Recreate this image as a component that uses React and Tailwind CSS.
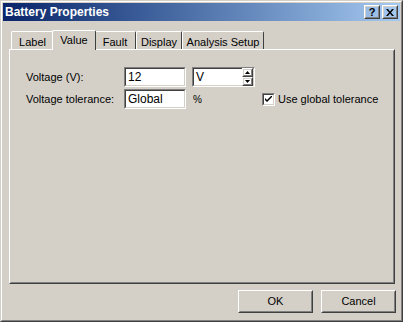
const font = { fontFamily: '"Liberation Sans", Arial, sans-serif' };

function Raised({ className = '', innerClassName = '', children }) {
  return (
    <div className={`border border-t-white border-l-white border-r-[#404040] border-b-[#404040] ${className}`}>
      <div className={`h-full w-full border border-t-[#d4d0c8] border-l-[#d4d0c8] border-r-[#808080] border-b-[#808080] ${innerClassName}`}>
        {children}
      </div>
    </div>
  );
}

function Sunken({ className = '', innerClassName = '', children }) {
  return (
    <div className={`border border-t-[#808080] border-l-[#808080] border-r-white border-b-white ${className}`}>
      <div className={`h-full w-full border border-t-[#404040] border-l-[#404040] border-r-[#d4d0c8] border-b-[#d4d0c8] bg-white ${innerClassName}`}>
        {children}
      </div>
    </div>
  );
}

function Tab({ label, active, width }) {
  if (active) {
    return (
      <div
        className="relative z-10 -mx-[2px] -mb-[1px] flex h-[20px] items-start justify-center rounded-t-[2px] border-t border-l border-r border-t-white border-l-white border-r-[#404040] bg-[#d4d0c8] pt-[1px]"
        style={{ width }}
      >
        {label}
      </div>
    );
  }
  return (
    <div
      className="flex h-[18px] items-start justify-center rounded-t-[2px] border-t border-l border-r border-t-white border-l-white border-r-[#404040] bg-[#d4d0c8] pt-[2px]"
      style={{ width }}
    >
      {label}
    </div>
  );
}

function Spinner() {
  return (
    <div className="flex w-[11px] flex-col">
      <Raised className="h-[9px] w-[11px]" innerClassName="flex items-center justify-center">
        <svg width="5" height="3" viewBox="0 0 5 3"><path d="M2.5 0 L5 3 L0 3 Z" fill="#000" /></svg>
      </Raised>
      <Raised className="h-[9px] w-[11px]" innerClassName="flex items-center justify-center">
        <svg width="5" height="3" viewBox="0 0 5 3"><path d="M0 0 L5 0 L2.5 3 Z" fill="#000" /></svg>
      </Raised>
    </div>
  );
}

export default function App() {
  const tabs = [
    { label: 'Label', width: 43 },
    { label: 'Value', width: 44, active: true },
    { label: 'Fault', width: 42 },
    { label: 'Display', width: 46 },
    { label: 'Analysis Setup', width: 82 },
  ];

  return (
    <div style={font} className="h-[322px] w-[403px] border border-t-[#d4d0c8] border-l-[#d4d0c8] border-r-[#404040] border-b-[#404040] bg-[#d4d0c8] text-[11px] text-black">
      <div className="flex h-full w-full flex-col border border-t-white border-l-white border-r-[#808080] border-b-[#808080] p-[1px]">
        <div className="flex h-[18px] items-center justify-between bg-gradient-to-r from-[#0a246a] to-[#a6caf0] pl-[2px] pr-[2px]">
          <span className="text-[12px] font-bold text-white">Battery Properties</span>
          <div className="flex gap-[2px]">
            <Raised className="h-[14px] w-[16px]" innerClassName="flex items-center justify-center">
              <span className="text-[11px] font-bold leading-none">?</span>
            </Raised>
            <Raised className="h-[14px] w-[16px]" innerClassName="flex items-center justify-center">
              <svg width="8" height="7" viewBox="0 0 8 7">
                <path d="M0 0 L2 0 L4 2.5 L6 0 L8 0 L5 3.5 L8 7 L6 7 L4 4.5 L2 7 L0 7 L3 3.5 Z" fill="#000" />
              </svg>
            </Raised>
          </div>
        </div>

        <div className="mt-[8px] ml-[8px] flex h-[20px] items-end">
          {tabs.map((t) => (
            <Tab key={t.label} label={t.label} active={t.active} width={t.width} />
          ))}
        </div>

        <div className="ml-[6px] h-[235px] w-[386px] border border-t-white border-l-white border-r-[#404040] border-b-[#404040]">
          <div className="h-full w-full border border-t-[#d4d0c8] border-l-[#d4d0c8] border-r-[#808080] border-b-[#808080] pl-[15px] pt-[16px]">
            <div className="flex h-[20px] items-center">
              <span className="w-[98px]">Voltage (V):</span>
              <Sunken className="h-[20px] w-[62px]" innerClassName="flex items-center pl-[2px] text-[12px]">
                12
              </Sunken>
              <Sunken className="ml-[6px] h-[20px] w-[63px]" innerClassName="flex items-center justify-between pl-[2px]">
                <span className="text-[12px]">V</span>
                <Spinner />
              </Sunken>
            </div>
            <div className="mt-[2px] flex h-[20px] items-center">
              <span className="w-[98px]">Voltage tolerance:</span>
              <Sunken className="h-[20px] w-[62px]" innerClassName="flex items-center pl-[2px] text-[12px]">
                Global
              </Sunken>
              <span className="ml-[7px] w-[69px] text-[10px]">%</span>
              <Sunken className="h-[13px] w-[13px]" innerClassName="flex items-center justify-center">
                <svg width="7" height="7" viewBox="0 0 7 7">
                  <path d="M0 2 L0 4 L2 6 L7 1 L7 -1 L2 4 Z" fill="#000" />
                </svg>
              </Sunken>
              <span className="ml-[3px]">Use global tolerance</span>
            </div>
          </div>
        </div>

        <div className="mt-[6px] flex justify-end gap-[8px] pr-[4px]">
          <Raised className="h-[23px] w-[75px]" innerClassName="flex items-center justify-center">OK</Raised>
          <Raised className="h-[23px] w-[75px]" innerClassName="flex items-center justify-center">Cancel</Raised>
        </div>
      </div>
    </div>
  );
}
